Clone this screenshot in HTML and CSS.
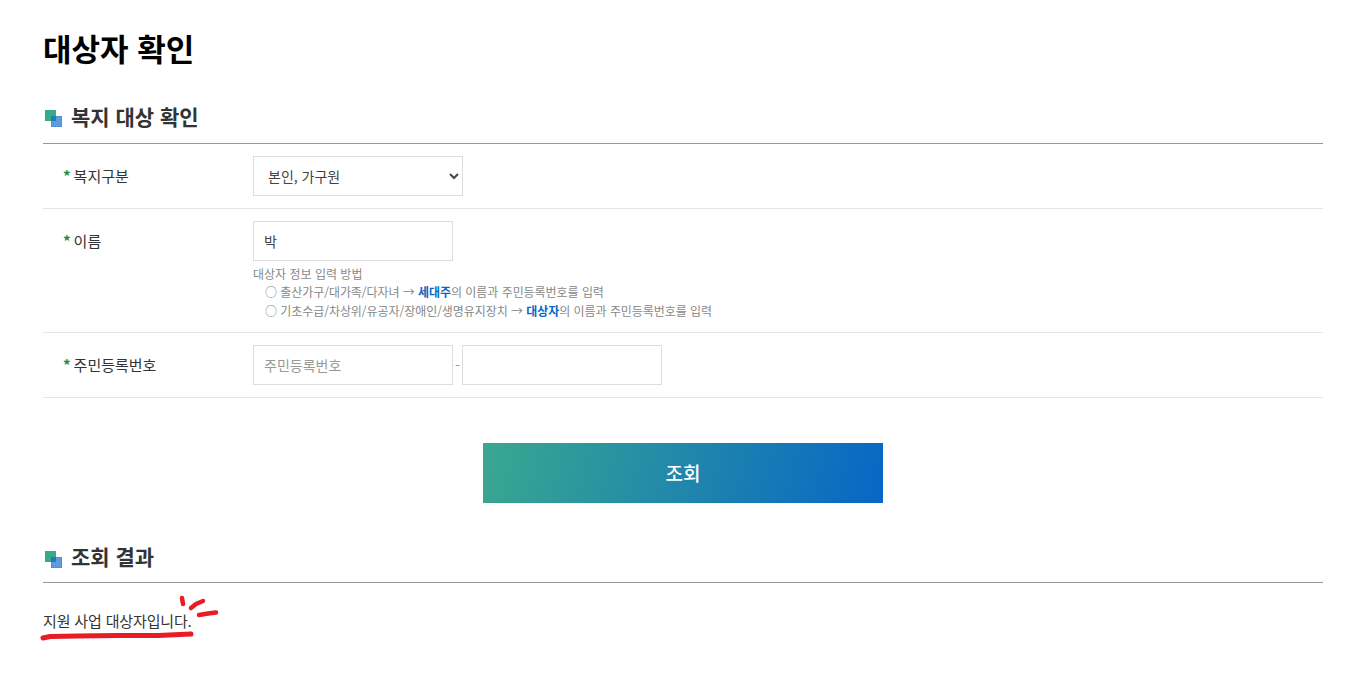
FILE: index.html
```html
<!DOCTYPE html>
<html lang="ko">
<head>
    <meta charset="UTF-8">
    <meta name="viewport" content="width=device-width, initial-scale=1.0">
    <title>대상자 확인</title>
    <link rel="stylesheet" href="styles.css">
</head>
<body>
    <div class="container">
        <h1>대상자 확인</h1>

        <h2 class="section-title">
            <svg class="title-icon" width="17" height="17" viewBox="0 0 17 17">
                <rect x="0" y="0" width="11" height="11" fill="#3aa78f"/>
                <rect x="6.5" y="6.5" width="10" height="10" fill="#5d9be0" stroke="#4f8fd8" stroke-width="1"/>
                <rect x="6" y="6" width="5" height="5" fill="#1f7fa8"/>
            </svg>
            복지 대상 확인
        </h2>
        <form class="check-form">
            <div class="form-row">
                <label class="form-label" for="kind"><span class="req">*</span>복지구분</label>
                <div class="form-field">
                    <select id="kind" class="select-box">
                        <option>본인, 가구원</option>
                    </select>
                </div>
            </div>
            <div class="form-row">
                <label class="form-label" for="name"><span class="req">*</span>이름</label>
                <div class="form-field">
                    <input type="text" id="name" class="text-box" value="박">
                    <div class="help">
                        <p>대상자 정보 입력 방법</p>
                        <p class="help-item">○ 출산가구/대가족/다자녀 → <b>세대주</b>의 이름과 주민등록번호를 입력</p>
                        <p class="help-item">○ 기초수급/차상위/유공자/장애인/생명유지장치 → <b>대상자</b>의 이름과 주민등록번호를 입력</p>
                    </div>
                </div>
            </div>
            <div class="form-row">
                <label class="form-label" for="rrn1"><span class="req">*</span>주민등록번호</label>
                <div class="form-field rrn">
                    <input type="text" id="rrn1" class="text-box" placeholder="주민등록번호">
                    <span class="dash">-</span>
                    <input type="text" id="rrn2" class="text-box">
                </div>
            </div>
            <div class="button-wrap">
                <button type="button" class="search-button">조회</button>
            </div>
        </form>

        <h2 class="section-title result-title">
            <svg class="title-icon" width="17" height="17" viewBox="0 0 17 17">
                <rect x="0" y="0" width="11" height="11" fill="#3aa78f"/>
                <rect x="6.5" y="6.5" width="10" height="10" fill="#5d9be0" stroke="#4f8fd8" stroke-width="1"/>
                <rect x="6" y="6" width="5" height="5" fill="#1f7fa8"/>
            </svg>
            조회 결과
        </h2>
        <div class="result">
            <p class="result-text">지원 사업 대상자입니다.</p>
            <svg class="marker" width="190" height="60" viewBox="0 0 190 60" fill="none" stroke="#e81c24" stroke-linecap="round" stroke-linejoin="round">
                <path d="M5 55 L12 53.500 L40 53 L80 52.500 L120 52.500 L153 51" stroke-width="5"/>
                <path d="M144 15 L145 21" stroke-width="4.500"/>
                <path d="M153 25 L158 21 L165 18" stroke-width="4.500"/>
                <path d="M161 32 L170 30.500 L178 29.500" stroke-width="4.500"/>
            </svg>
        </div>
    </div>
</body>
</html>
```

FILE: styles.css
```css
* {
    box-sizing: border-box;
}

html, body {
    margin: 0;
    padding: 0;
    background-color: #fff;
}

body {
    font-family: "Noto Sans CJK KR", "Noto Sans", sans-serif;
    font-size: 15px;
    color: #333;
}

.container {
    width: 1280px;
    margin-left: 43px;
    padding-top: 25px;
}

h1 {
    margin: 0;
    font-size: 31px;
    line-height: 46px;
    font-weight: 700;
    color: #000;
}

.section-title {
    display: flex;
    align-items: center;
    gap: 9px;
    margin: 23px 0 0;
    height: 50px;
    padding: 0 0 6px 2px;
    border-bottom: 1px solid #999;
    font-size: 21px;
    font-weight: 700;
    color: #333;
}

.title-icon {
    flex-shrink: 0;
    margin-top: 6px;
}

.form-row {
    display: flex;
    padding: 12px 0;
    border-bottom: 1px solid #e5e5e5;
}

.form-label {
    width: 210px;
    padding-left: 20px;
    line-height: 40px;
    color: #333;
}

.req {
    margin-right: 3px;
    color: #1e8a4c;
    font-weight: 700;
}

.select-box, .text-box {
    height: 40px;
    border: 1px solid #ddd;
    background-color: #fff;
    font-family: inherit;
    font-size: 14px;
    color: #444;
    border-radius: 0;
    outline: none;
}

.select-box {
    width: 210px;
    padding-left: 10px;
}

.text-box {
    width: 200px;
    padding: 0 10px;
}

.text-box::placeholder {
    color: #999;
}

.help {
    margin-top: 4px;
    font-size: 12px;
    line-height: 18px;
    color: #888;
}

.help p {
    margin: 0;
}

.help .help-item {
    padding-left: 12px;
    letter-spacing: -0.05px;
}

.help .help-item + .help-item {
    margin-top: 1px;
}

.help b {
    color: #0a66c2;
}

.rrn {
    display: flex;
    align-items: center;
    gap: 2px;
}

.dash {
    color: #999;
    font-size: 14px;
}

.button-wrap {
    display: flex;
    justify-content: center;
    margin-top: 45px;
}

.search-button {
    width: 400px;
    height: 60px;
    padding: 0 0 2px;
    border: none;
    background: linear-gradient(105deg, #3aa88f, #0766c6);
    color: #fff;
    font-family: inherit;
    font-size: 19px;
    font-weight: 500;
    cursor: pointer;
}

.section-title.result-title {
    margin-top: 30px;
    padding-bottom: 3px;
}

.result {
    position: relative;
    padding: 27px 0 40px;
}

.result-text {
    margin: 0;
    font-size: 15px;
    line-height: 22px;
    letter-spacing: -0.15px;
}

.marker {
    position: absolute;
    left: -5px;
    top: 0;
}
```
